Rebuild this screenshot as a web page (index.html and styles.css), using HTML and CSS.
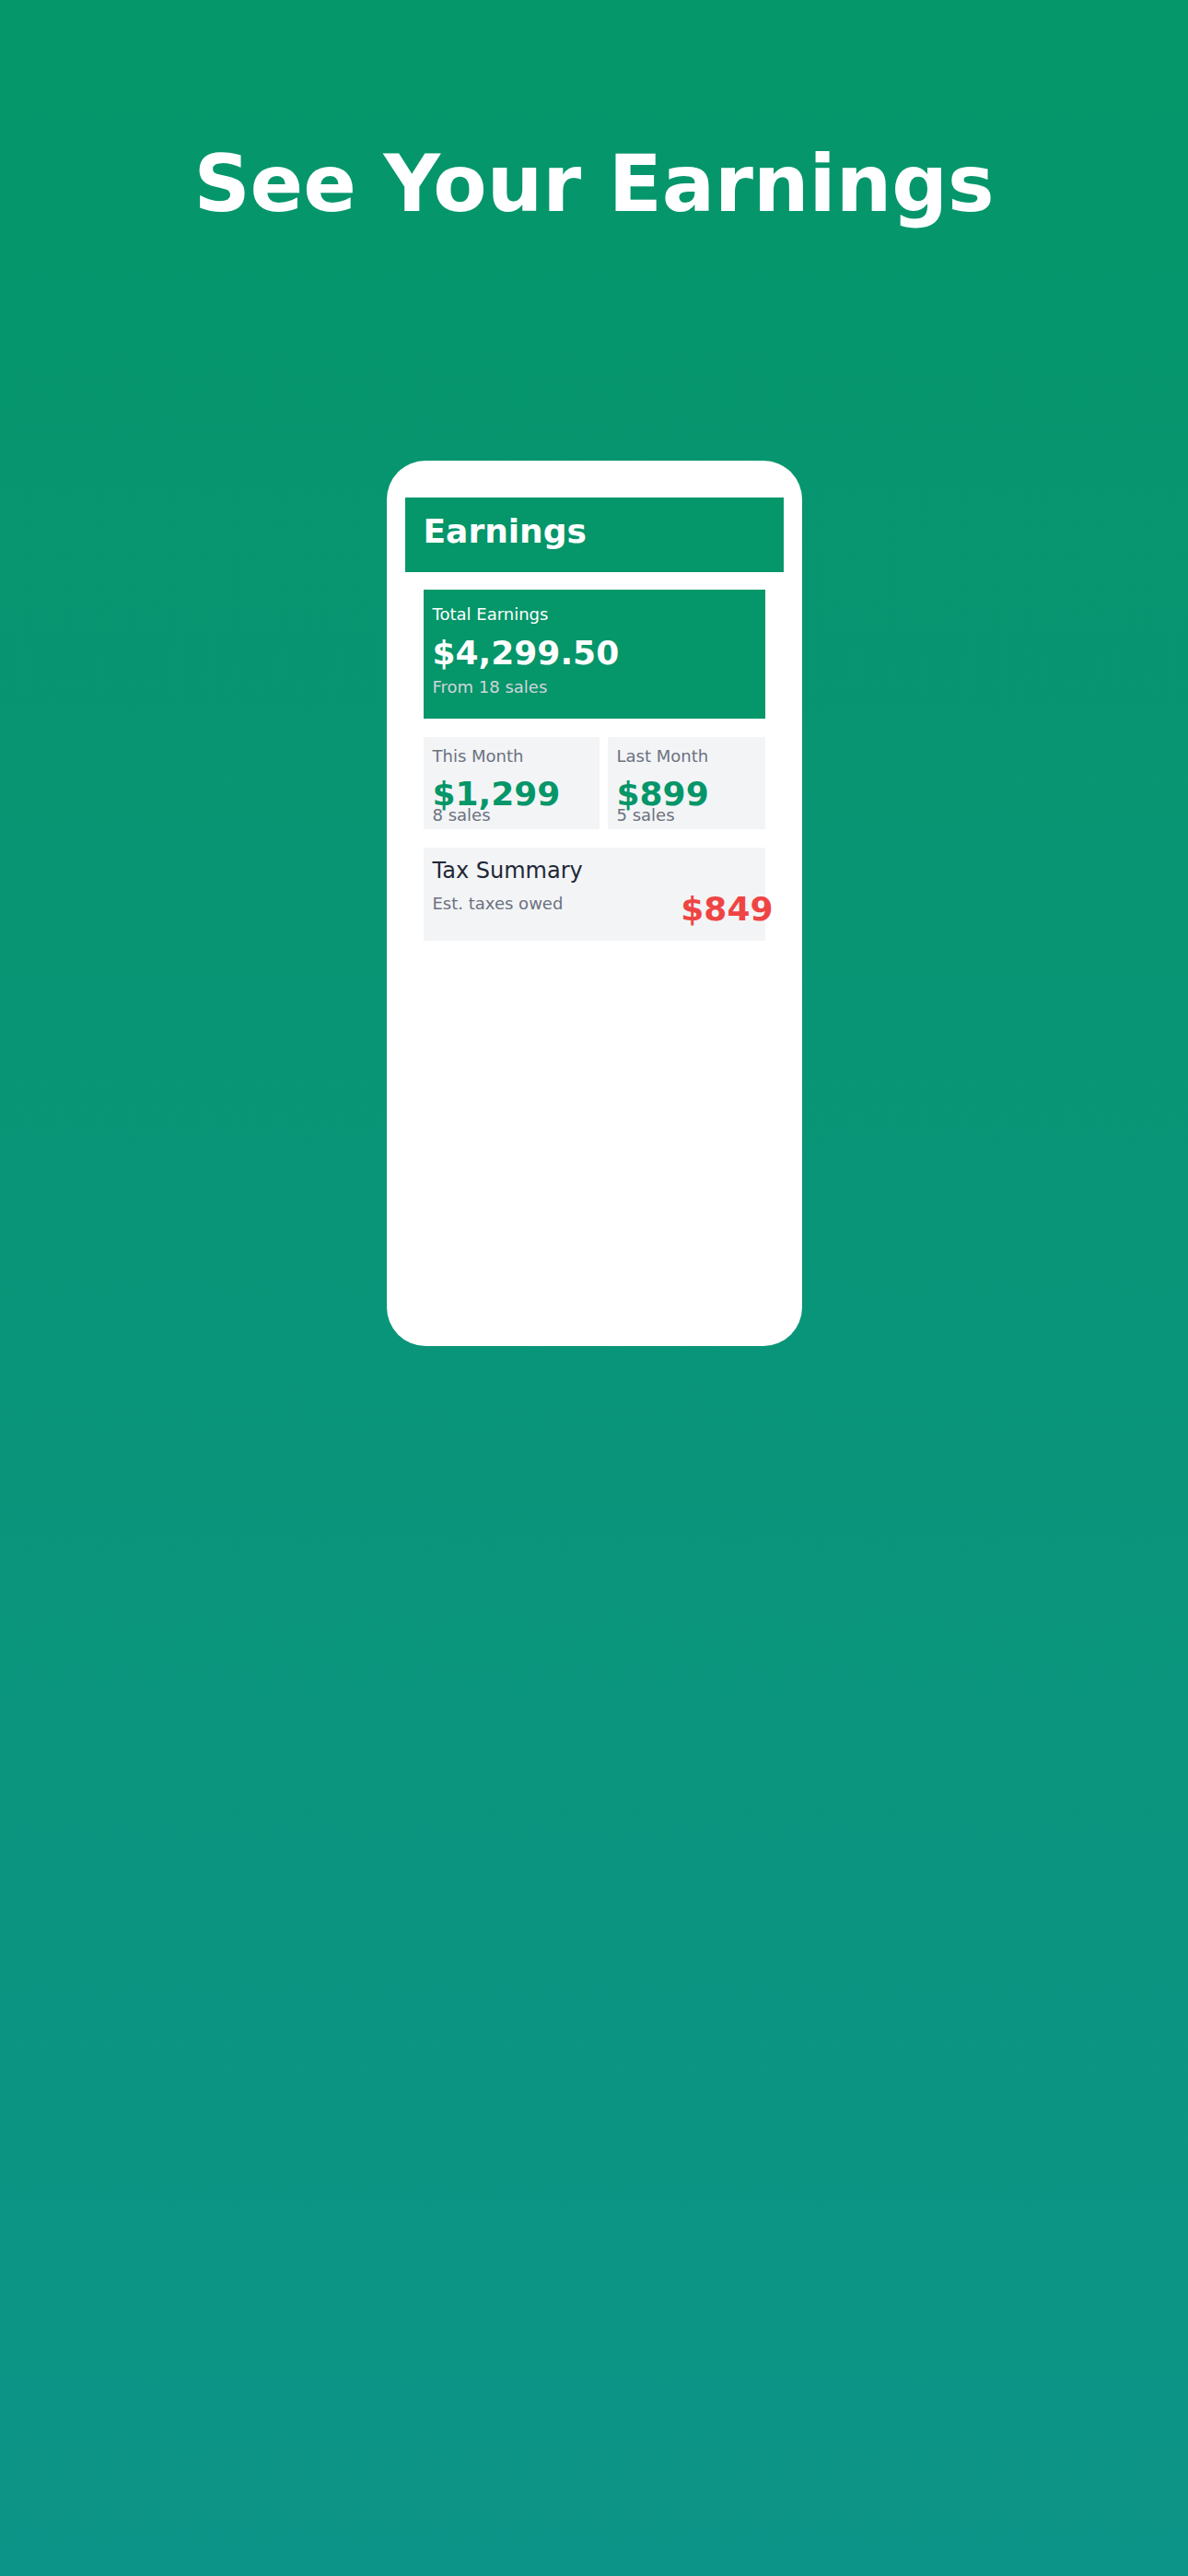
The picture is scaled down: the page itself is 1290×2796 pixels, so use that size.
FILE: index.html
```html
<!DOCTYPE html>
<html lang="en">
<head>
<meta charset="UTF-8" />
<meta name="viewport" content="width=device-width, initial-scale=1" />
<title>See Your Earnings</title>
<link rel="stylesheet" href="styles.css">
</head>
<body>

<div class="hero">
  <h1 class="hero-title">See Your Earnings</h1>

  <!-- Phone mockup -->
  <div class="phone">
    <div class="app-header">
      <h2>Earnings</h2>
    </div>

    <div class="app-content">
      <div class="total-card">
        <div class="total-label">Total Earnings</div>
        <div class="total-amount">$4,299.50</div>
        <div class="total-sub">From 18 sales</div>
      </div>

      <div class="month-row">
        <div class="month-card">
          <div class="month-label">This Month</div>
          <div class="month-amount">$1,299</div>
          <div class="month-sales">8 sales</div>
        </div>
        <div class="month-card">
          <div class="month-label">Last Month</div>
          <div class="month-amount">$899</div>
          <div class="month-sales">5 sales</div>
        </div>
      </div>

      <div class="tax-card">
        <div class="tax-title">Tax Summary</div>
        <div class="tax-row">
          <div class="tax-label">Est. taxes owed</div>
          <div class="tax-amount">$849</div>
        </div>
      </div>
    </div>
  </div>
</div>

</body>
</html>
```

FILE: styles.css
```css
* {
  box-sizing: border-box;
}
html {
  height: 100%;
}
body {
  margin: 0;
  min-height: 100%;
  font-family: "DejaVu Sans", sans-serif;
  background: linear-gradient(180deg, #059669 0%, #0d9488 100%);
}
.hero {
  padding-top: 150px;
  text-align: center;
}
.hero-title {
  margin: 0;
  font-size: 85px;
  line-height: 99px;
  font-weight: bold;
  color: #fff;
}
.phone {
  width: 451px;
  height: 961px;
  margin: 251px auto 0;
  padding: 40px 20px;
  background: #fff;
  border-radius: 42px;
  text-align: left;
}
.app-header {
  background: #059669;
  padding: 16px 20px 23px;
}
.app-header h2 {
  margin: 0;
  font-size: 36px;
  line-height: 42px;
  color: #fff;
}
.app-content {
  display: flex;
  flex-direction: column;
  gap: 20px;
  padding: 19px 20px;
}
.total-card {
  background: #059669;
  color: #fff;
  padding: 16px 10px 24px;
}
.total-label {
  font-size: 18px;
  line-height: 21px;
}
.total-amount {
  margin-top: 11px;
  font-size: 36px;
  line-height: 42px;
  font-weight: bold;
}
.total-sub {
  margin-top: 5px;
  font-size: 18px;
  line-height: 21px;
  color: #d1d5db;
}
.month-row {
  display: grid;
  grid-template-columns: 191px 1fr;
  gap: 9px;
}
.month-card {
  background: #f3f4f6;
  padding: 10px 10px 5px;
}
.month-label,
.month-sales {
  font-size: 18px;
  line-height: 21px;
  color: #6b7280;
}
.month-amount {
  margin-top: 18px;
  font-size: 36px;
  line-height: 25px;
  font-weight: bold;
  color: #059669;
}
.tax-card {
  background: #f3f4f6;
  padding: 11px 10px 13px;
}
.tax-title {
  font-size: 24px;
  line-height: 28px;
  color: #1f2937;
}
.tax-row {
  display: flex;
  justify-content: space-between;
  align-items: flex-start;
  margin-top: 7px;
}
.tax-label {
  margin-top: 4px;
  font-size: 18px;
  line-height: 21px;
  color: #6b7280;
}
.tax-amount {
  margin-right: -19px;
  font-size: 36px;
  line-height: 42px;
  font-weight: bold;
  color: #ef4444;
}
```
